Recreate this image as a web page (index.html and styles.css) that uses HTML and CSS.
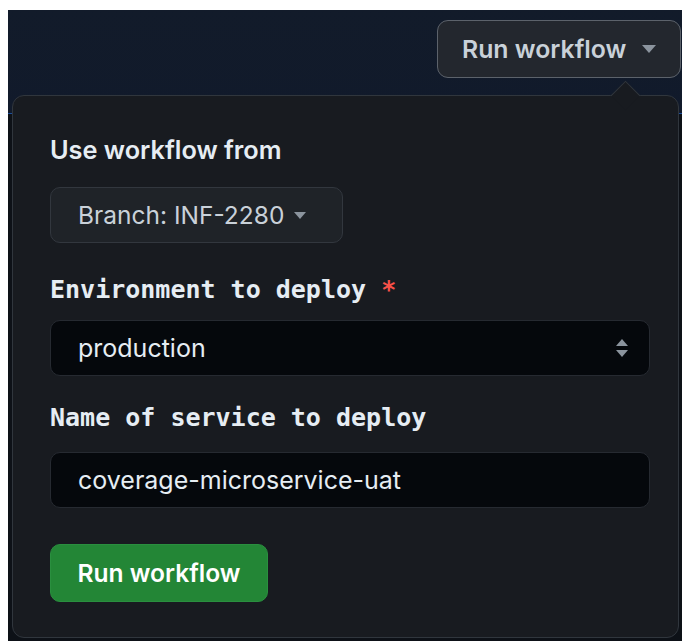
FILE: index.html
```html
<!DOCTYPE html>
<html lang="en">
<head>
<meta charset="utf-8">
<title>Run workflow</title>
<link rel="stylesheet" href="styles.css">
</head>
<body>
<div class="stage">
  <header class="topbar">
    <button class="btn-header" type="button">
      <span>Run workflow</span>
      <svg class="caret" width="14" height="8" viewBox="0 0 14 8"><path d="M0 0h14L7 8z"/></svg>
    </button>
  </header>

  <form class="popover">
    <div class="field-title">Use workflow from</div>
    <button class="btn-branch" type="button">
      <span>Branch: INF-2280</span>
      <svg class="caret small" width="12" height="7" viewBox="0 0 12 7"><path d="M0 0h12L6 7z"/></svg>
    </button>

    <label class="mono-label">Environment to deploy <span class="req">*</span></label>
    <div class="control select">
      <span>production</span>
      <svg class="updown" width="12" height="18" viewBox="0 0 12 18"><path d="M6 0l6 7H0z"/><path d="M0 11h12l-6 7z"/></svg>
    </div>

    <label class="mono-label">Name of service to deploy</label>
    <div class="control input">coverage-microservice-uat</div>

    <button class="btn-primary" type="button">Run workflow</button>
  </form>
</div>
</body>
</html>
```
FILE: styles.css
```css
html, body {
  margin: 0;
  padding: 0;
  background: #ffffff;
}

.stage {
  position: relative;
  margin: 10px 0 0 8px;
  height: 631px;
  background: #0d1117;
  overflow: hidden;
  font-family: Inter, "Liberation Sans", sans-serif;
}

/* top navigation strip */
.topbar {
  box-sizing: border-box;
  height: 104px;
  padding: 10px 1px 0 0;
  display: flex;
  justify-content: flex-end;
  align-items: flex-start;
  background: linear-gradient(180deg, #121b2a 0%, #111a2b 100%);
  border-bottom: 1px solid #1c4f9c;
}

.btn-header {
  box-sizing: border-box;
  width: 244px;
  height: 58px;
  padding: 0 0 0 24px;
  display: flex;
  align-items: center;
  gap: 16px;
  background: #23272e;
  border: 1.5px solid #5c626b;
  border-radius: 11px;
  color: #c9d1d9;
  font: 600 24.8px Inter, "Liberation Sans", sans-serif;
}

.caret {
  fill: #8b949e;
}

/* the dropdown panel */
.popover {
  position: absolute;
  left: 4px;
  top: 85px;
  box-sizing: border-box;
  width: 667px;
  height: 543px;
  margin: 0;
  padding: 36px 0 0 37px;
  display: flex;
  flex-direction: column;
  align-items: flex-start;
  background: #181b20;
  border: 1px solid #30363d;
  border-radius: 12px;
}

.popover::before {
  content: "";
  position: absolute;
  left: 602px;
  top: -11px;
  width: 20px;
  height: 20px;
  background: #181b20;
  border-left: 1px solid #30363d;
  border-top: 1px solid #30363d;
  transform: rotate(45deg);
}

.field-title {
  height: 36px;
  line-height: 36px;
  font-size: 25.3px;
  font-weight: 600;
  color: #e6edf3;
}

.btn-branch {
  box-sizing: border-box;
  margin-top: 19px;
  width: 293px;
  height: 56px;
  padding: 0 0 0 27px;
  display: flex;
  align-items: center;
  gap: 10px;
  background: #1f2328;
  border: 1px solid #32373e;
  border-radius: 10px;
  color: #c9d1d9;
  font: 400 24.5px Inter, "Liberation Sans", sans-serif;
}

.mono-label {
  margin-top: 29px;
  height: 36px;
  line-height: 36px;
  font-family: "DejaVu Sans Mono", "Liberation Mono", monospace;
  font-size: 25px;
  font-weight: 700;
  color: #e6edf3;
}

.mono-label + .control {
  margin-top: 12px;
}

.btn-branch + .mono-label {
  margin-top: 29px;
}

.select + .mono-label {
  margin-top: 24px;
}

.req {
  color: #f85149;
}

.control {
  box-sizing: border-box;
  width: 600px;
  height: 56px;
  padding: 0 0 0 27px;
  display: flex;
  align-items: center;
  background: #05080c;
  border: 1px solid #262a31;
  border-radius: 10px;
  color: #e6edf3;
  font-size: 25px;
}

.select {
  justify-content: space-between;
  padding-right: 21px;
}

.input.control {
  margin-top: 16px;
}

.updown {
  fill: #8b949e;
}

.btn-primary {
  box-sizing: border-box;
  margin-top: 36px;
  width: 218px;
  height: 58px;
  padding: 0;
  background: #238636;
  border: 1px solid #2a8f3f;
  border-radius: 10px;
  color: #ffffff;
  font: 600 24.6px Inter, "Liberation Sans", sans-serif;
}
```
